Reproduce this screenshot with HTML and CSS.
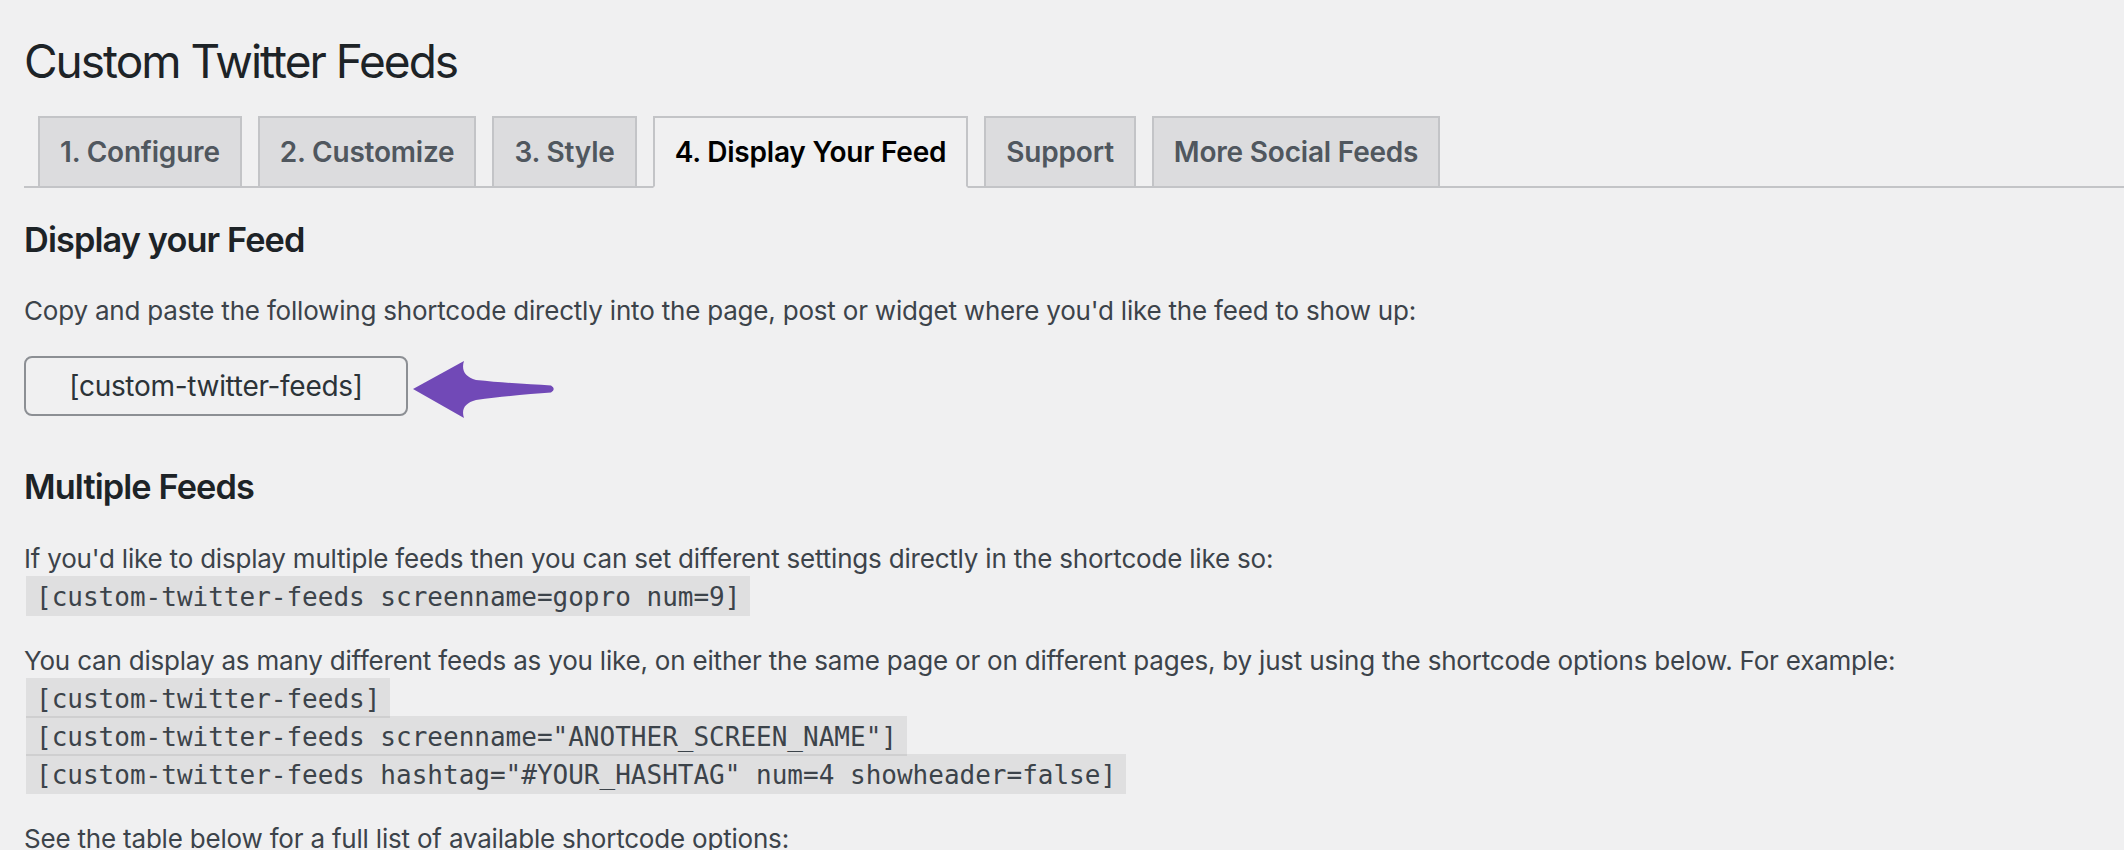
FILE: index.html
```html
<!DOCTYPE html>
<html lang="en">
<head>
<meta charset="utf-8">
<title>Custom Twitter Feeds</title>
<link rel="stylesheet" href="styles.css">
</head>
<body>
<div class="wrap">
  <h1 class="page-title">Custom Twitter Feeds</h1>
  <nav class="nav-tabs">
    <a class="nav-tab">1. Configure</a>
    <a class="nav-tab">2. Customize</a>
    <a class="nav-tab">3. Style</a>
    <a class="nav-tab nav-tab-active">4. Display Your Feed</a>
    <a class="nav-tab">Support</a>
    <a class="nav-tab">More Social Feeds</a>
  </nav>

  <h2 class="section-title">Display your Feed</h2>
  <p class="text">Copy and paste the following shortcode directly into the page, post or widget where you'd like the feed to show up:</p>
  <div class="shortcode-row">
    <div class="shortcode-box">[custom-twitter-feeds]</div>
    <svg class="arrow" viewBox="0 0 150 64" width="150" height="64" aria-hidden="true">
      <path d="M3 32 L54 4 C51 13 55 20 66 23 C95 26 120 27 141 28.5 Q146.5 32 141 35.5 C120 37 95 39 66 43 C55 46 51 52 54 61 Z" fill="#7149b7"/>
    </svg>
  </div>

  <h2 class="section-title">Multiple Feeds</h2>
  <p class="text">If you'd like to display multiple feeds then you can set different settings directly in the shortcode like so:<br><code>[custom-twitter-feeds screenname=gopro num=9]</code></p>
  <p class="text">You can display as many different feeds as you like, on either the same page or on different pages, by just using the shortcode options below. For example:<br><code>[custom-twitter-feeds]</code><br><code>[custom-twitter-feeds screenname="ANOTHER_SCREEN_NAME"]</code><br><code>[custom-twitter-feeds hashtag="#YOUR_HASHTAG" num=4 showheader=false]</code></p>
  <p class="text">See the table below for a full list of available shortcode options:</p>
</div>
</body>
</html>
```

FILE: styles.css
```css
html, body {
  margin: 0;
  padding: 0;
  background: #f0f0f1;
}

body {
  font-family: Inter, "Noto Sans", "Liberation Sans", sans-serif;
  font-size: 26px;
  line-height: 36.4px;
  color: #3c434a;
}

.wrap {
  padding: 14px 0 0 24px;
}

.page-title {
  margin: 0;
  padding: 18px 0 8px;
  font-size: 46px;
  font-weight: 400;
  line-height: 59.8px;
  letter-spacing: -2px;
  color: #1d2327;
}

.nav-tabs {
  display: flex;
  align-items: flex-end;
  gap: 16px;
  padding: 16px 0 0 14px;
  border-bottom: 2px solid #c3c4c7;
}

.nav-tab {
  display: block;
  margin-bottom: -2px;
  padding: 10px 20px;
  border: 2px solid #c3c4c7;
  background: #dcdcde;
  color: #50575e;
  font-size: 28px;
  font-weight: 600;
  line-height: 48px;
  letter-spacing: -0.2px;
  white-space: nowrap;
}

.nav-tab-active {
  background: #f0f0f1;
  border-bottom-color: #f0f0f1;
  color: #000;
}

.section-title {
  margin: 34px 0;
  font-size: 34.32px;
  font-weight: 600;
  line-height: 36.4px;
  letter-spacing: -0.9px;
  color: #1d2327;
}

.text {
  margin: 26px 0;
  line-height: 38px;
  letter-spacing: -0.2px;
}

.shortcode-row {
  display: flex;
  align-items: center;
  margin: -5px 0 48px;
}

.shortcode-box {
  box-sizing: border-box;
  width: 384px;
  height: 60px;
  border: 2px solid #8c8f94;
  border-radius: 8px;
  background: #f0f0f1;
  color: #2c3338;
  font-size: 28px;
  line-height: 56px;
  letter-spacing: -0.3px;
  text-align: center;
}

.arrow {
  display: block;
  margin: 6px 0 0 2px;
}

code {
  font-family: "DejaVu Sans Mono", "Liberation Mono", monospace;
  font-size: 26px;
  line-height: 1;
  letter-spacing: 0;
  padding: 6px 10px 4px;
  margin: 0 2px;
  background: rgba(0, 0, 0, 0.07);
  color: #3c434a;
}
```
